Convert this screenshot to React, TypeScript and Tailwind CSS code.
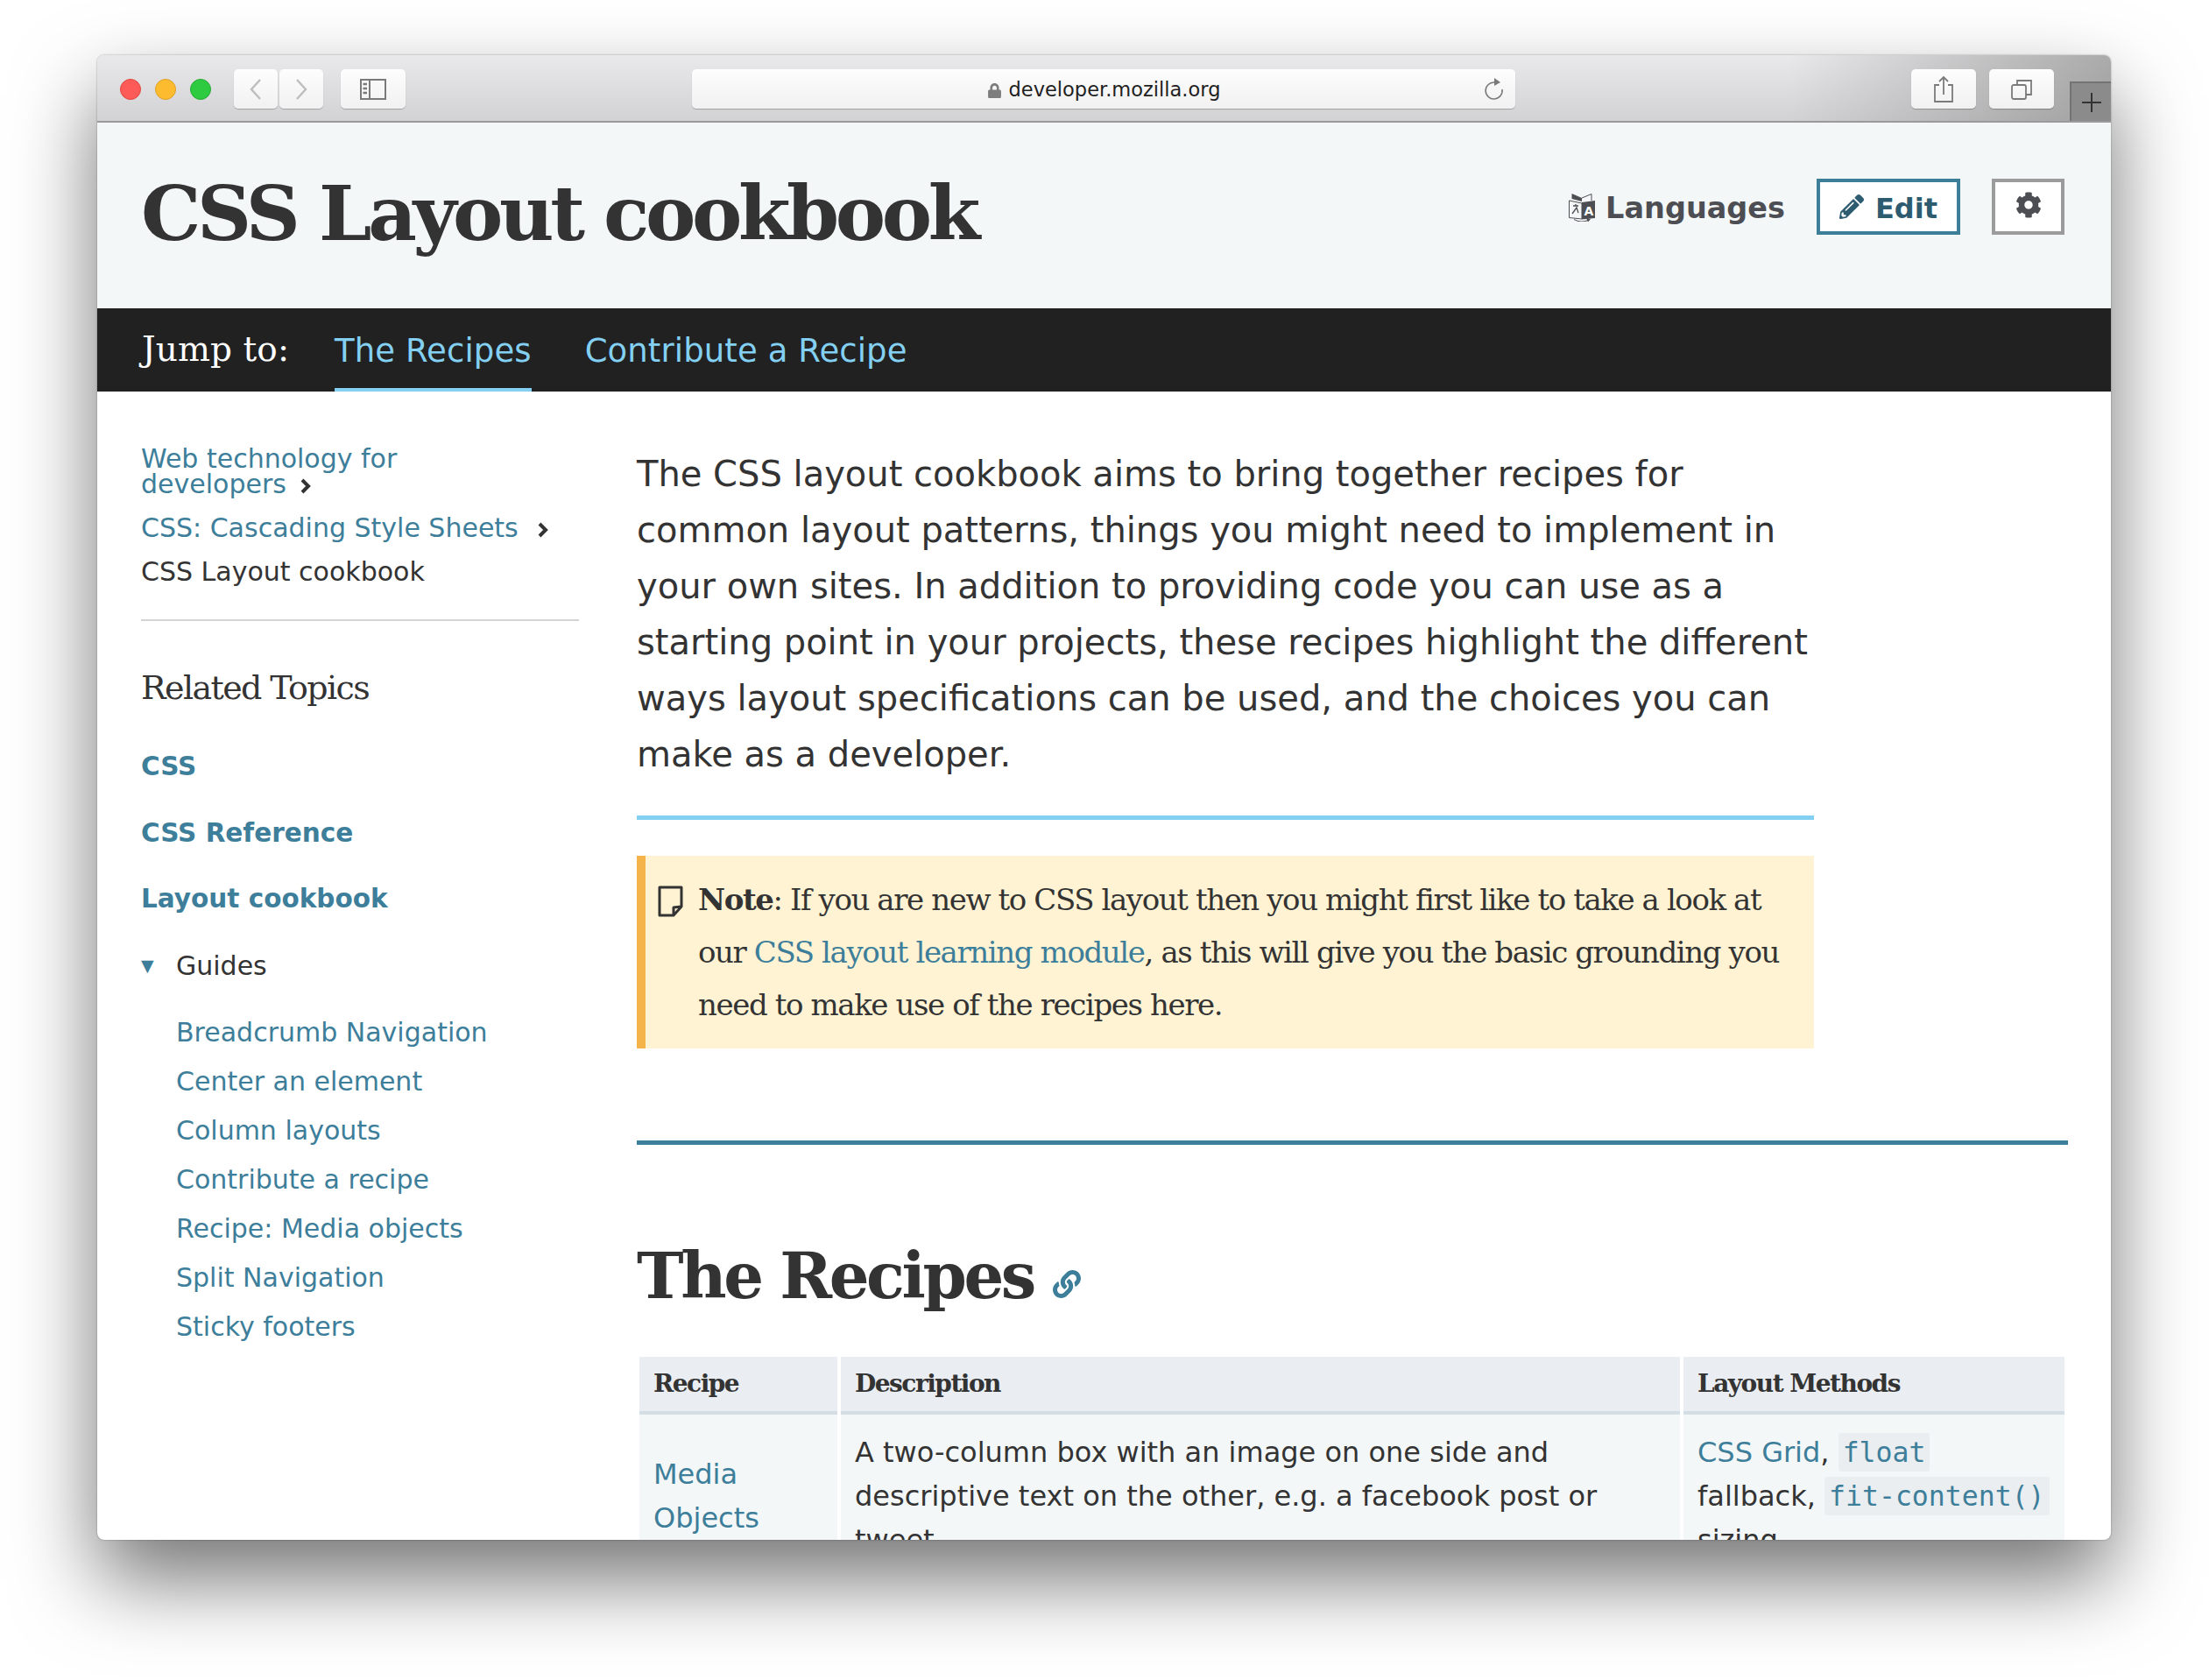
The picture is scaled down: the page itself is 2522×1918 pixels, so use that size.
import { FaCog, FaPencilAlt, FaLink, FaLock } from "react-icons/fa";

const sans = "font-['DejaVu_Sans',sans-serif]";
const slab = "font-['DejaVu_Serif',serif]";
const link = "text-[#3d7e9a]";

function Btn({ className, children }: { className: string; children: React.ReactNode }) {
  return (
    <div className={`h-[45px] flex items-center justify-center rounded-[5px] bg-gradient-to-b from-[#fdfdfd] to-[#f2f1f2] shadow-[0_1px_1px_rgba(0,0,0,0.25)] ${className}`}>
      {children}
    </div>
  );
}

function Chevron({ className }: { className: string }) {
  return (
    <svg className={`inline align-[-1px] ${className}`} width="12" height="18" viewBox="0 0 12 18" fill="none" stroke="#333" strokeWidth="4"><path d="M2 2 L9 9 L2 16" /></svg>
  );
}

function Toolbar() {
  return (
    <div className="relative h-[77px] shrink-0 flex items-start pt-[16px] pl-[26px] border-b-2 border-[#9a9a9c] bg-[linear-gradient(to_right,transparent_70%,transparent_84%,rgba(120,120,120,0.55)_100%),linear-gradient(to_bottom,#e9e8ea,#d2d1d3)]">
      <div className="flex gap-[16px] items-center h-[45px] mr-[26px]">
        <span className="w-[24px] h-[24px] rounded-full bg-[#fc5b57] border border-[#e2463f]" />
        <span className="w-[24px] h-[24px] rounded-full bg-[#fdbb2f] border border-[#dea123]" />
        <span className="w-[24px] h-[24px] rounded-full bg-[#2ecb40] border border-[#27aa35]" />
      </div>
      <Btn className="w-[50px] mr-[2px]">
        <svg width="16" height="26" viewBox="0 0 16 26" fill="none" stroke="#bdbdbd" strokeWidth="2.4"><path d="M13 2 L3 13 L13 24" /></svg>
      </Btn>
      <Btn className="w-[50px] mr-[20px]">
        <svg width="16" height="26" viewBox="0 0 16 26" fill="none" stroke="#bdbdbd" strokeWidth="2.4"><path d="M3 2 L13 13 L3 24" /></svg>
      </Btn>
      <Btn className="w-[74px]">
        <svg width="30" height="24" viewBox="0 0 30 24" fill="none" stroke="#7a7a7a" strokeWidth="2"><rect x="1" y="1" width="28" height="22" /><path d="M11 1 V23" /><path d="M3.5 6 H8 M3.5 11 H8 M3.5 16 H8" strokeWidth="2.5" /></svg>
      </Btn>
      <Btn className="w-[940px] ml-[327px] relative gap-[8px] text-[22.5px] text-[#1f1f1f] pt-[3px]">
        <FaLock className="text-[#7d7d7d] text-[17px]" />
        <span className={sans}>developer.mozilla.org</span>
        <svg className="absolute right-[12px] top-[9px]" width="24" height="28" viewBox="0 0 24 28" fill="none" stroke="#7a7a7a" strokeWidth="1.6"><path d="M12 6 A9.5 9.5 0 1 0 21 14" /><path d="M12 1 L19 6 L12 10 Z" fill="#7a7a7a" stroke="none" /></svg>
      </Btn>
      <Btn className="w-[74px] ml-[452px]">
        <svg width="24" height="32" viewBox="0 0 24 32" fill="none" stroke="#7a7a7a" strokeWidth="1.8"><path d="M7 11 H2 V30 H22 V11 H17 M12 22 V2 M7 7 L12 2 L17 7" /></svg>
      </Btn>
      <Btn className="w-[74px] ml-[15px]">
        <svg width="26" height="26" viewBox="0 0 26 26" fill="none" stroke="#7a7a7a" strokeWidth="1.8"><rect x="2" y="8" width="16" height="16" rx="2" /><path d="M8 8 V3 H24 V19 H18" /></svg>
      </Btn>
      <div className="absolute right-0 bottom-0 w-[47px] h-[45px] bg-[#8c8b8c] border-l-2 border-t-2 border-[#747374] flex items-center justify-center">
        <svg width="24" height="24" viewBox="0 0 24 24" stroke="#333" strokeWidth="2"><path d="M12 1 V23 M1 12 H23" /></svg>
      </div>
    </div>
  );
}

function Header() {
  return (
    <div className="h-[212px] shrink-0 bg-[#f4f7f8] flex items-start pl-[50px] pr-[53px]">
      <h1 className={`${slab} font-bold text-[86px] leading-[110px] mt-[49px] tracking-[-4.4px] text-[#333] whitespace-nowrap`}>CSS Layout cookbook</h1>
      <div className="ml-auto mt-[64px] flex items-start">
        <div className={`${sans} flex items-center font-bold text-[33.5px] text-[#4d4e53] h-[64px] pt-[4px] mr-[36px]`}>
          <svg className="mr-[12px] -mt-[2px]" width="30" height="32" viewBox="0 0 30 32">
            <path d="M0.5 8 L15 11 V29 L0.5 27.5 Z" fill="#f4f7f8" stroke="#4d4e53" strokeWidth="1" />
            <path d="M15 10 L30 8 V28 L15 29.5 Z" fill="#4d4e53" />
            <path d="M3.5 0 L15 5 V9 L3.5 6 Z" fill="#4d4e53" />
            <path d="M15 5 L26 0.5 V8" stroke="#4d4e53" strokeWidth="1" fill="none" />
            <path d="M4 23 L9 16 L11 22 M5 14 H11 M8 12 V14" stroke="#4d4e53" strokeWidth="1.3" fill="none" />
            <path d="M6 29.5 Q14 34 22 30.5" stroke="#4d4e53" strokeWidth="1" fill="none" />
            <path d="M20 28 L25 29 L22 32.5 Z" fill="#4d4e53" />
            <text x="17.5" y="25" fontSize="14" fill="#fff" fontFamily="DejaVu Sans" fontWeight="700">A</text>
          </svg>
          Languages
        </div>
        <div className={`${sans} w-[164px] h-[64px] border-[4px] border-[#3d7e9a] bg-white flex items-center justify-center gap-[13px] pt-[3px] font-bold text-[32px] text-[#2d5b70]`}>
          <FaPencilAlt className="text-[28px] -mt-[3px]" />
          Edit
        </div>
        <div className="ml-[36px] w-[83px] h-[64px] border-[4px] border-[#9b9b9b] bg-white flex items-start pt-[11px] justify-center text-[#4d4e53] text-[30px]">
          <FaCog />
        </div>
      </div>
    </div>
  );
}

function JumpBar() {
  return (
    <div className="h-[95px] shrink-0 bg-[#212121] flex pl-[51px]">
      <span className={`${slab} text-white text-[39px] tracking-[0.1px] leading-[94px] w-[220px]`}>Jump to:</span>
      <span className={`${sans} text-[#83d0f2] text-[37px] tracking-[0.1px] leading-[98px] h-[95px] border-b-[4px] border-[#83d0f2] mr-[61px]`}>The Recipes</span>
      <span className={`${sans} text-[#83d0f2] text-[37px] tracking-[0.1px] leading-[98px]`}>Contribute a Recipe</span>
    </div>
  );
}

function Sidebar() {
  const guides = ["Breadcrumb Navigation", "Center an element", "Column layouts", "Contribute a recipe", "Recipe: Media objects", "Split Navigation", "Sticky footers"];
  return (
    <aside className={`${sans} w-[500px] shrink-0 text-[30px] pt-[62px]`}>
      <div className={`${link} leading-[29px] w-[330px]`}>
        Web technology for developers
        <Chevron className="ml-[16px]" />
      </div>
      <div className={`${link} leading-[50px] mt-[11px] whitespace-nowrap`}>
        CSS: Cascading Style Sheets
        <Chevron className="ml-[22px]" />
      </div>
      <div className="text-[#333] leading-[50px]">CSS Layout cookbook</div>
      <div className="h-[2px] bg-[#d4d4d4] mt-[29px]" />
      <div className={`${slab} text-[38px] tracking-[-1.6px] leading-[56px] text-[#333] mt-[48px]`}>Related Topics</div>
      <div className={`${link} font-bold text-[29.5px] leading-[75.5px] mt-[25px]`}>CSS</div>
      <div className={`${link} font-bold text-[29.5px] leading-[75.5px]`}>CSS Reference</div>
      <div className={`${link} font-bold text-[29.5px] leading-[75.5px]`}>Layout cookbook</div>
      <div className="flex items-center h-[75.5px] text-[#333]">
        <span className="text-[#3d7e9a] text-[19px] w-[40px]">▼</span>Guides
      </div>
      <div className="pl-[40px] mt-[11px]">
        {guides.map((g) => (
          <div key={g} className={`${link} leading-[56px]`}>{g}</div>
        ))}
      </div>
    </aside>
  );
}

function Main() {
  const code = `${link} font-['DejaVu_Sans_Mono',monospace] text-[31.5px] bg-[#eaeef0] rounded-[3px] px-[5px] py-[4px]`;
  return (
    <main className={`${sans} ml-[66px] w-[1634px] pt-[62px]`}>
      <p className="w-[1344px] text-[40px] leading-[64px] text-[#333]">
        The CSS layout cookbook aims to bring together recipes for common layout patterns, things you might need to implement in your own sites. In addition to providing code you can use as a starting point in your projects, these recipes highlight the different ways layout specifications can be used, and the choices you can make as a developer.
      </p>
      <div className="w-[1344px] h-[5px] bg-[#83d0f2] mt-[38px]" />
      <div className={`w-[1344px] h-[220px] mt-[41px] bg-[#fff3d4] border-l-[10px] border-[#f4b44a] relative pl-[60px] pr-[20px] pt-[20px] ${slab} text-[34px] tracking-[-1.4px] leading-[60px] text-[#333]`}>
        <svg className="absolute left-[13px] top-[34px]" width="31" height="36" viewBox="0 0 31 36" fill="none" stroke="#333" strokeWidth="3"><path d="M3 2 H28 V24 L19 34 H3 Z M28 24 L19 25 V34" strokeLinejoin="round" /></svg>
        <strong>Note</strong>: If you are new to CSS layout then you might first like to take a look at our <span className={link}>CSS layout learning module</span>, as this will give you the basic grounding you need to make use of the recipes here.
      </div>
      <div className="w-[1634px] h-[5px] bg-[#3d7e9a] mt-[105px]" />
      <h2 className={`flex items-center ${slab} font-bold text-[72px] leading-[100px] text-[#333] mt-[100px] tracking-[-3.4px]`}>
        The Recipes
        <FaLink className={`${link} text-[32px] ml-[22px] mt-[17px]`} />
      </h2>
      <table className="mt-[42px] w-[1631px] table-fixed border-separate border-spacing-x-[4px] border-spacing-y-0 -ml-[1px] text-[32px] leading-[50px] text-[#333]">
        <colgroup>
          <col className="w-[226px]" />
          <col className="w-[958px]" />
          <col className="w-[435px]" />
        </colgroup>
        <thead>
          <tr className="bg-[#eaeef2]">
            {["Recipe", "Description", "Layout Methods"].map((h) => (
              <th key={h} className={`${slab} h-[66px] px-[16px] border-b-4 border-[#d4dde4] text-left font-bold text-[28px] tracking-[-1.5px]`}>{h}</th>
            ))}
          </tr>
        </thead>
        <tbody>
          <tr className="bg-[#f4f7f8]">
            <td className={`${link} px-[16px] pt-[18px] align-middle`}>Media Objects</td>
            <td className="px-[16px] pt-[18px]">A two-column box with an image on one side and descriptive text on the other, e.g. a facebook post or tweet.</td>
            <td className="px-[16px] pt-[18px]">
              <span className={link}>CSS Grid</span>, <code className={code}>float</code> fallback, <code className={code}>fit-content()</code> sizing
            </td>
          </tr>
        </tbody>
      </table>
    </main>
  );
}

export default function App() {
  return (
    <div className="w-[2522px] h-[1918px] bg-white pl-[111px] pt-[63px] overflow-hidden">
      <div className="w-[2299px] h-[1695px] rounded-[8px] overflow-hidden flex flex-col bg-white shadow-[0_0_2px_rgba(0,0,0,0.4),0_45px_95px_rgba(0,0,0,0.55)]">
        <Toolbar />
        <Header />
        <JumpBar />
        <div className="flex pl-[50px] min-h-0 flex-1">
          <Sidebar />
          <Main />
        </div>
      </div>
    </div>
  );
}
